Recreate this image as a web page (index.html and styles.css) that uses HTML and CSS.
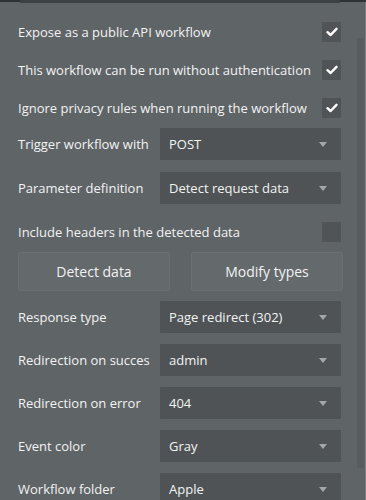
FILE: index.html
```html
<!DOCTYPE html>
<html>
<head>
<meta charset="utf-8">
<link rel="stylesheet" href="styles.css">
</head>
<body>
<div class="topbar"><div class="topbar-inner"></div></div>
<div class="panel">
  <div class="content">
    <div class="check-row first">
      <span class="label">Expose as a public API workflow</span>
      <span class="box checked"><svg viewBox="0 0 12 10" width="12" height="10"><path d="M1.5 5.2 L4.6 8 L10.5 1.8" fill="none" stroke="#fff" stroke-width="2.4" stroke-linecap="round" stroke-linejoin="round"/></svg></span>
    </div>
    <div class="check-row">
      <span class="label">This workflow can be run without authentication</span>
      <span class="box checked"><svg viewBox="0 0 12 10" width="12" height="10"><path d="M1.5 5.2 L4.6 8 L10.5 1.8" fill="none" stroke="#fff" stroke-width="2.4" stroke-linecap="round" stroke-linejoin="round"/></svg></span>
    </div>
    <div class="check-row">
      <span class="label">Ignore privacy rules when running the workflow</span>
      <span class="box checked"><svg viewBox="0 0 12 10" width="12" height="10"><path d="M1.5 5.2 L4.6 8 L10.5 1.8" fill="none" stroke="#fff" stroke-width="2.4" stroke-linecap="round" stroke-linejoin="round"/></svg></span>
    </div>

    <div class="field-row r-trigger">
      <span class="label">Trigger workflow with</span>
      <div class="select"><span>POST</span><i class="arrow"></i></div>
    </div>
    <div class="field-row r-param">
      <span class="label">Parameter definition</span>
      <div class="select"><span>Detect request data</span><i class="arrow"></i></div>
    </div>

    <div class="check-row r-include">
      <span class="label">Include headers in the detected data</span>
      <span class="box"></span>
    </div>

    <div class="buttons">
      <div class="btn">Detect data</div>
      <div class="btn">Modify types</div>
    </div>

    <div class="field-row r-response">
      <span class="label">Response type</span>
      <div class="select"><span>Page redirect (302)</span><i class="arrow"></i></div>
    </div>
    <div class="field-row">
      <span class="label">Redirection on succes</span>
      <div class="select"><span>admin</span><i class="arrow"></i></div>
    </div>
    <div class="field-row">
      <span class="label">Redirection on error</span>
      <div class="select"><span>404</span><i class="arrow"></i></div>
    </div>
    <div class="field-row">
      <span class="label">Event color</span>
      <div class="select"><span>Gray</span><i class="arrow"></i></div>
    </div>
    <div class="field-row">
      <span class="label">Workflow folder</span>
      <div class="select"><span>Apple</span><i class="arrow"></i></div>
    </div>
  </div>
  <div class="scrollbar"></div>
  <div class="edge"></div>
</div>
</body>
</html>
```
FILE: styles.css
```css
html, body {
  margin: 0;
  padding: 0;
  background: #5f6467;
  height: 500px;
  overflow: hidden;
}
body {
  font-family: "Open Sans", "Liberation Sans", sans-serif;
  font-size: 13px;
  color: #f2f3f3;
}
.topbar {
  height: 2px;
  background: #2e3234;
  position: relative;
}
.topbar-inner {
  position: absolute;
  left: 20px;
  width: 320px;
  top: 0;
  height: 3px;
  background: #3d4144;
}
.panel {
  display: flex;
  height: 498px;
}
.content {
  width: 325px;
  padding-left: 18px;
  flex: none;
}
.check-row {
  display: flex;
  align-items: center;
  justify-content: space-between;
  height: 20px;
  margin-top: 18px;
  padding-right: 2px;
}
.check-row.first {
  margin-top: 20px;
}
.label {
  white-space: nowrap;
  line-height: 20px;
}
.box {
  width: 19px;
  height: 20px;
  background: #505457;
  border-radius: 1px;
  display: flex;
  align-items: center;
  justify-content: center;
  flex: none;
}
.field-row {
  display: flex;
  align-items: center;
  justify-content: space-between;
  margin-top: 11px;
  padding-right: 2px;
}
.r-trigger { margin-top: 10px; }
.r-param { margin-top: 12px; }
.r-include { margin-top: 18px; }
.r-response { margin-top: 10px; }
.select {
  width: 181px;
  height: 32px;
  background: #4f5356;
  border-radius: 1px;
  display: flex;
  align-items: center;
  justify-content: space-between;
  padding: 0 14px 0 9px;
  box-sizing: border-box;
  font-size: 13px;
}
.arrow {
  width: 0;
  height: 0;
  border-left: 4.5px solid transparent;
  border-right: 4.5px solid transparent;
  border-top: 5px solid #a3a7aa;
}
.buttons {
  display: flex;
  justify-content: space-between;
  margin-top: 10px;
}
.btn {
  width: 152px;
  height: 39px;
  box-sizing: border-box;
  background: #64696c;
  border: 1px solid #6a6f72;
  border-radius: 2px;
  display: flex;
  align-items: center;
  justify-content: center;
  font-size: 14px;
}
.scrollbar {
  width: 7px;
  margin-left: 14px;
  margin-top: 36px;
  height: 430px;
  background: #575c5f;
  flex: none;
}
.edge {
  width: 2px;
  margin-left: 1px;
  background: #7a7e80;
  flex: none;
}
```
